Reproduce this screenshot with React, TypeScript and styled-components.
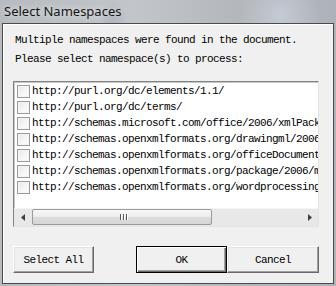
import React from 'react';
import styled, { createGlobalStyle, css } from 'styled-components';

const GlobalStyle = createGlobalStyle`
  html, body { margin: 0; padding: 0; }
  body { width: 336px; height: 286px; overflow: hidden; background: #b9bdc2; }
`;

const MONO = `'Liberation Mono', 'DejaVu Sans Mono', monospace`;

const NAMESPACES = [
  'http://purl.org/dc/elements/1.1/',
  'http://purl.org/dc/terms/',
  'http://schemas.microsoft.com/office/2006/xmlPackage',
  'http://schemas.openxmlformats.org/drawingml/2006/main',
  'http://schemas.openxmlformats.org/officeDocument/2006/relationships',
  'http://schemas.openxmlformats.org/package/2006/metadata',
  'http://schemas.openxmlformats.org/wordprocessingml/2006/main',
];

export default function App() {
  return (
    <>
      <GlobalStyle />
      <Window>
        <TitleBar>Select Namespaces</TitleBar>
        <Client>
          <Message>
            Multiple namespaces were found in the document.
            <br />
            Please select namespace(s) to process:
          </Message>
          <ListBox>
            <Rows>
              {NAMESPACES.map(ns => (
                <Row key={ns}>
                  <Check />
                  <RowText>{ns}</RowText>
                </Row>
              ))}
            </Rows>
            <HScroll>
              <ArrowBtn>
                <svg width="4" height="7" viewBox="0 0 4 7">
                  <path d="M4 0 L0 3.5 L4 7 Z" fill="#404040" />
                </svg>
              </ArrowBtn>
              <Track>
                <Thumb>
                  <Grip />
                  <Grip />
                  <Grip />
                </Thumb>
              </Track>
              <ArrowBtn>
                <svg width="4" height="7" viewBox="0 0 4 7">
                  <path d="M0 0 L4 3.5 L0 7 Z" fill="#404040" />
                </svg>
              </ArrowBtn>
            </HScroll>
          </ListBox>
          <ButtonRow>
            <Button width={81}>Select All</Button>
            <RightButtons>
              <Button width={91} isDefault>
                OK
              </Button>
              <Button width={92}>Cancel</Button>
            </RightButtons>
          </ButtonRow>
        </Client>
      </Window>
    </>
  );
}

const Window = styled.div`
  width: 336px;
  height: 286px;
  box-sizing: border-box;
  padding: 0 2px 2px 2px;
  display: flex;
  flex-direction: column;
  background:
    radial-gradient(circle at 113px 16px, rgba(150, 160, 180, 0.55) 0, rgba(150, 160, 180, 0) 14px),
    radial-gradient(circle at 280px 16px, rgba(205, 212, 222, 0.7) 0, rgba(205, 212, 222, 0) 40px),
    linear-gradient(90deg, #b7bbbf 0%, #c2c5c9 40%, #b4b8bd 70%, #aeb3ba 100%);
`;

const TitleBar = styled.div`
  height: 23px;
  flex: none;
  padding-left: 2px;
  display: flex;
  align-items: center;
  font-family: 'Noto Sans', 'Open Sans', sans-serif;
  font-size: 13px;
  color: #151515;
  text-shadow: 0 0 6px rgba(255, 255, 255, 0.9);
  padding-bottom: 2px;
  box-sizing: border-box;
`;

const Client = styled.div`
  flex: 1;
  background: #f0f0f0;
  border: 1px solid #4a4a4a;
  box-shadow: inset 1px 1px 0 #ffffff;
  padding: 7px 0 0 10px;
  display: flex;
  flex-direction: column;
  overflow: hidden;
`;

const Message = styled.div`
  font-family: ${MONO};
  font-size: 11px;
  letter-spacing: -0.6px;
  line-height: 19px;
  color: #000;
  padding-left: 2px;
`;

const ListBox = styled.div`
  margin-top: 12px;
  width: 306px;
  height: 146px;
  box-sizing: border-box;
  background: #fff;
  border: 1px solid;
  border-color: #828282 #e3e3e3 #e3e3e3 #828282;
  box-shadow: inset 1px 1px 0 #c8c8c8;
  display: flex;
  flex-direction: column;
`;

const Rows = styled.div`
  flex: 1;
  overflow: hidden;
  padding-top: 1px;
`;

const Row = styled.div`
  height: 16px;
  display: flex;
  align-items: center;
  padding-left: 3px;
  gap: 2px;
  white-space: nowrap;
`;

const Check = styled.span`
  width: 13px;
  height: 13px;
  flex: none;
  box-sizing: border-box;
  border: 1px solid #9a9b9b;
  background: linear-gradient(135deg, #e8e8e8 0%, #f8f8f8 60%, #ffffff 100%);
  box-shadow: inset 0 0 0 1px #f6f6f6;
`;

const RowText = styled.span`
  font-family: ${MONO};
  font-size: 11px;
  letter-spacing: -0.6px;
  color: #000;
`;

const HScroll = styled.div`
  height: 17px;
  flex: none;
  display: flex;
  background: #e8e8e8;
  border-top: 1px solid #f4f4f4;
`;

const ArrowBtn = styled.div`
  width: 17px;
  flex: none;
  display: flex;
  align-items: center;
  justify-content: center;
`;

const Track = styled.div`
  flex: 1;
  display: flex;
  align-items: stretch;
  padding: 0 0 1px 1px;
`;

const Thumb = styled.div`
  width: 180px;
  box-sizing: border-box;
  border: 1px solid #9a9a9a;
  border-radius: 2px;
  background: linear-gradient(180deg, #f7f7f7 0%, #ececec 50%, #dcdcdc 51%, #d6d6d6 100%);
  display: flex;
  align-items: center;
  justify-content: center;
  gap: 2px;
  padding-left: 3px;
`;

const Grip = styled.span`
  width: 1px;
  height: 6px;
  background: #555;
  box-shadow: 1px 0 0 #fff;
`;

const ButtonRow = styled.div`
  margin-top: 19px;
  width: 306px;
  display: flex;
  justify-content: space-between;
`;

const RightButtons = styled.div`
  display: flex;
`;

const Button = styled.button<{ width: number; isDefault?: boolean }>`
  width: ${p => p.width}px;
  height: 27px;
  box-sizing: border-box;
  margin: 0;
  padding: 0;
  font-family: ${MONO};
  font-size: 11px;
  letter-spacing: -0.6px;
  color: #000;
  background: #f0f0f0;
  border: 1px solid;
  border-color: #ffffff #696969 #696969 #ffffff;
  box-shadow: inset -1px -1px 0 #a0a0a0, inset 1px 1px 0 #e3e3e3;
  ${p =>
    p.isDefault &&
    css`
      border: 1px solid #000;
      box-shadow: inset 1px 1px 0 #ffffff, inset -1px -1px 0 #696969, inset -2px -2px 0 #a0a0a0;
    `}
`;
